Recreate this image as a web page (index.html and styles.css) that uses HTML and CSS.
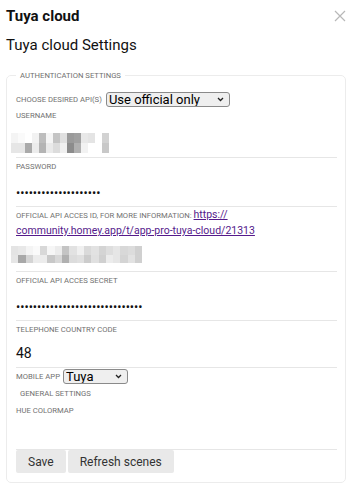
FILE: index.html
```html
<!DOCTYPE html>
<html>
<head>
	<title>Tuya cloud</title>
<link rel="stylesheet" href="styles.css">
</head>
<body>
<div class="head">
	<div class="title">Tuya cloud</div>
	<svg class="close" width="12" height="12" viewBox="0 0 12 12"><path d="M1 1L11 11M11 1L1 11" stroke="#b8b8b8" stroke-width="1.2" fill="none"/></svg>
</div>
<div class="subtitle">Tuya cloud Settings</div>

<fieldset class="box">
	<legend>Authentication settings</legend>

	<div class="row inline">
		<label>Choose desired API(s)</label>
		<span class="selwrap wide">
			<select class="sel"><option>Use official only</option></select>
			<svg class="chev" width="7" height="5" viewBox="0 0 7 5"><path d="M1 1L3.5 3.5L6 1" stroke="#222" stroke-width="1.3" fill="none"/></svg>
		</span>
	</div>

	<div class="row">
		<label>Username</label>
		<div class="blur u">
			<i style="background:#f4f4f4"></i><i style="background:#fafafa"></i><i style="background:#fff"></i><i style="background:#f2f2f2"></i><i style="background:#bdbdbd"></i><i style="background:#f5f5f5"></i><i style="background:#c4c4c4"></i><i style="background:#e0e0e0"></i><i style="background:#9a9a9a"></i><i style="background:#a0a0a0"></i><i style="background:#e8e8e8"></i><i style="background:#e4e4e4"></i><i style="background:#fff"></i><i style="background:#d2d2d2"></i><i style="background:#fff"></i><i style="background:#fff"></i>
			<i style="background:#e6e6e6"></i><i style="background:#e6e6e6"></i><i style="background:#aaaaaa"></i><i style="background:#ececec"></i><i style="background:#b4b4b4"></i><i style="background:#eaeaea"></i><i style="background:#dcdcdc"></i><i style="background:#f0f0f0"></i><i style="background:#8c8c8c"></i><i style="background:#b0b0b0"></i><i style="background:#f2f2f2"></i><i style="background:#fff"></i><i style="background:#fff"></i><i style="background:#c8c8c8"></i><i style="background:#fff"></i><i style="background:#fff"></i>
		</div>
	</div>

	<div class="row">
		<label>Password</label>
		<div class="dots">••••••••••••••••••••</div>
	</div>

	<div class="row link">
		<label>Official API acces ID, for more information: <a href="#">https://<br>community.homey.app/t/app-pro-tuya-cloud/21313</a></label>
		<div class="blur id">
			<i style="background:#e4e4e4"></i><i style="background:#e8e8e8"></i><i style="background:#f4f4f4"></i><i style="background:#fafafa"></i><i style="background:#d8d8d8"></i><i style="background:#f6f6f6"></i><i style="background:#ececec"></i><i style="background:#c4c4c4"></i><i style="background:#e2e2e2"></i><i style="background:#f0f0f0"></i><i style="background:#dadada"></i><i style="background:#e2e2e2"></i><i style="background:#d4d4d4"></i><i style="background:#dedede"></i><i style="background:#e6e6e6"></i><i style="background:#d8d8d8"></i><i style="background:#dcdcdc"></i><i style="background:#d0d0d0"></i>
			<i style="background:#e6e6e6"></i><i style="background:#a8a8a8"></i><i style="background:#d4d4d4"></i><i style="background:#ececec"></i><i style="background:#ececec"></i><i style="background:#c8c8c8"></i><i style="background:#d8d8d8"></i><i style="background:#b0b0b0"></i><i style="background:#dcdcdc"></i><i style="background:#e0e0e0"></i><i style="background:#cccccc"></i><i style="background:#e0e0e0"></i><i style="background:#d0d0d0"></i><i style="background:#ececec"></i><i style="background:#e6e6e6"></i><i style="background:#d4d4d4"></i><i style="background:#e2e2e2"></i><i style="background:#d0d0d0"></i>
		</div>
	</div>

	<div class="row">
		<label>Official API acces secret</label>
		<div class="dots">••••••••••••••••••••••••••••••</div>
	</div>

	<div class="row">
		<label>Telephone country code</label>
		<div class="val">48</div>
	</div>

	<div class="row inline last">
		<label>Mobile app</label>
		<span class="selwrap small">
			<select class="sel"><option>Tuya</option></select>
			<svg class="chev" width="7" height="5" viewBox="0 0 7 5"><path d="M1 1L3.5 3.5L6 1" stroke="#222" stroke-width="1.3" fill="none"/></svg>
		</span>
	</div>

	<fieldset class="sub">
		<legend>General settings</legend>
		<label>Hue colormap</label>
	</fieldset>

	<div class="buttons">
		<button>Save</button>
		<button>Refresh scenes</button>
	</div>
</fieldset>

</body>
</html>
```

FILE: styles.css
```css
body {
	margin: 0;
	padding: 0 2px 0 6px;
	font-family: Roboto, "Noto Sans", Arial, sans-serif;
	color: #222;
	background: #fff;
}
.head {
	display: flex;
	justify-content: space-between;
	align-items: center;
	height: 32px;
}
.title {
	font-size: 15px;
	font-weight: bold;
	color: #111;
}
.subtitle {
	font-size: 15px;
	color: #111;
	margin-top: 4px;
	height: 25px;
}
fieldset.box {
	margin: 9px 0 0 0;
	padding: 0 8px 9px 9px;
	border: 1px solid #ececec;
	border-radius: 5px;
}
legend {
	font-size: 7.7px;
	line-height: 11px;
	text-transform: uppercase;
	color: #707070;
	padding: 0 4px;
	margin: 0;
}
label {
	font-size: 7.7px;
	text-transform: uppercase;
	color: #707070;
	line-height: 11px;
}
.row {
	border-bottom: 1px solid #e6e6e6;
	padding-top: 3px;
}
.row label {
	display: block;
}
.row.inline {
	display: flex;
	align-items: center;
	gap: 4px;
	border: none;
	padding-top: 11px;
}
.row.inline.last {
	padding-top: 1px;
	gap: 3px;
}
.selwrap {
	position: relative;
	display: inline-block;
	height: 15px;
}
.selwrap.wide { width: 124px; }
.selwrap.small { width: 65px; }
.sel {
	appearance: none;
	-webkit-appearance: none;
	box-sizing: border-box;
	width: 100%;
	height: 15px;
	margin: 0;
	font-family: Roboto, Arial, sans-serif;
	font-size: 13px;
	line-height: 13px;
	padding: 0 2px;
	border: 1px solid #8a8a8a;
	border-radius: 3px;
	background: #efefef;
	color: #000;
	display: block;
}
.chev {
	position: absolute;
	right: 6px;
	top: 5px;
}
.blur {
	display: grid;
	margin: 12px 0 4px -5px;
	height: 20px;
}
.blur.u {
	grid-template-columns: repeat(16, 7px);
	grid-template-rows: 10px 10px;
}
.blur.id {
	grid-template-columns: repeat(18, 7.3px);
	grid-template-rows: 8.5px 8.5px;
	height: 17px;
	margin: 6px 0 8px -5px;
}
.row.link {
	padding-top: 1px;
}
.row.link label {
	line-height: 16px;
}
.dots {
	font-size: 12.5px;
	line-height: 13px;
	color: #111;
	padding: 14px 0 7px;
}
.val {
	font-size: 14px;
	line-height: 13px;
	color: #111;
	padding: 12px 0 7px;
}
a {
	font-size: 10.5px;
	line-height: 1;
	text-transform: none;
	color: #551a8b;
}
fieldset.sub {
	border: none;
	margin: 4px 0 0 0;
	padding: 6px 0 33px;
	border-bottom: 1px solid #e6e6e6;
}
fieldset.sub label {
	display: block;
}
.buttons {
	display: flex;
	gap: 2px;
}
button {
	font-family: Roboto, Arial, sans-serif;
	font-size: 12px;
	color: #333;
	background: #e9e9e9;
	border: none;
	border-radius: 2px;
	height: 23px;
	padding: 0 12px;
}
```
